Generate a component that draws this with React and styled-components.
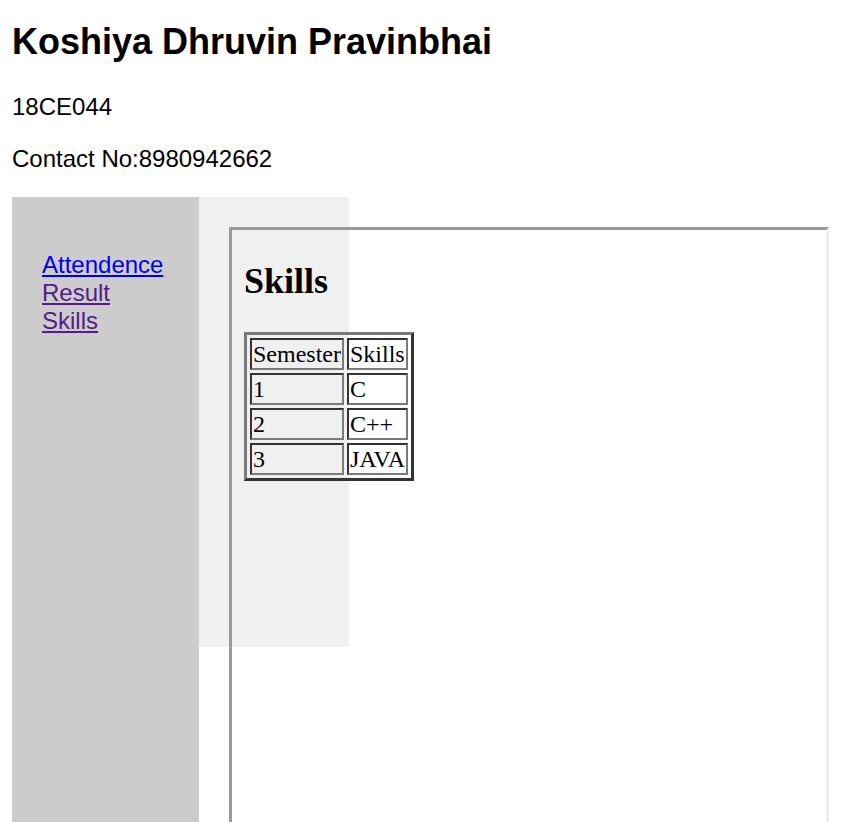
import React from "react";
import styled, { createGlobalStyle } from "styled-components";

const GlobalStyle = createGlobalStyle`
  html, body {
    margin: 0;
    padding: 0;
    background: #ffffff;
    overflow: hidden;
  }
  body {
    font-family: "Liberation Sans", Arial, sans-serif;
    font-size: 24px;
    color: #000000;
  }
`;

const Page = styled.div`
  padding: 0 12px;
`;

const Title = styled.h1`
  font-size: 36px;
  font-weight: bold;
  margin: 21px 0 30px;
`;

const Info = styled.p`
  margin: 24px 0;
`;

const Main = styled.div`
  display: flex;
  align-items: stretch;
`;

const Sidebar = styled.nav`
  width: 187px;
  flex: none;
  background: #cccccc;
  padding: 54px 0 0 30px;
  box-sizing: border-box;
`;

const NavLink = styled.a`
  display: block;
  width: max-content;
  color: ${(p) => (p.$visited ? "#551a8b" : "#0000ee")};
  text-decoration: underline;
  font-size: 24px;
`;

const Content = styled.div`
  position: relative;
  flex: 1;
  padding: 30px 0 0 30px;
`;

const Backdrop = styled.div`
  position: absolute;
  top: 0;
  left: 0;
  width: 150px;
  height: 450px;
  background: #f0f0f0;
`;

const Frame = styled.div`
  position: relative;
  width: 600px;
  height: 600px;
  box-sizing: border-box;
  border: 3px solid;
  border-color: #9a9a9a #eeeeee #eeeeee #9a9a9a;
  padding: 0 12px;
  font-family: "Liberation Serif", "Times New Roman", serif;
`;

const FrameHeading = styled.h2`
  font-size: 36px;
  font-weight: bold;
  margin: 30px 0;
`;

const Table = styled.table`
  border-collapse: separate;
  border-spacing: 3px;
  border: 3px solid;
  border-color: #7a7a7a #333333 #333333 #7a7a7a;
  font-size: 24px;
`;

const Cell = styled.td`
  border: 2px solid;
  border-color: #333333 #7a7a7a #7a7a7a #333333;
  padding: 1px;
  line-height: 26px;
  text-align: left;
  vertical-align: middle;
`;

const rows = [
  ["Semester", "Skills"],
  ["1", "C"],
  ["2", "C++"],
  ["3", "JAVA"],
];

export default function App() {
  return (
    <>
      <GlobalStyle />
      <Page>
        <Title>Koshiya Dhruvin Pravinbhai</Title>
        <Info>18CE044</Info>
        <Info>Contact No:8980942662</Info>
        <Main>
          <Sidebar>
            <NavLink href="#attendence">Attendence</NavLink>
            <NavLink href="#result" $visited>
              Result
            </NavLink>
            <NavLink href="#skills" $visited>
              Skills
            </NavLink>
          </Sidebar>
          <Content>
            <Backdrop />
            <Frame>
              <FrameHeading>Skills</FrameHeading>
              <Table>
                <tbody>
                  {rows.map((r, i) => (
                    <tr key={i}>
                      {r.map((c, j) => (
                        <Cell key={j}>{c}</Cell>
                      ))}
                    </tr>
                  ))}
                </tbody>
              </Table>
            </Frame>
          </Content>
        </Main>
      </Page>
    </>
  );
}
